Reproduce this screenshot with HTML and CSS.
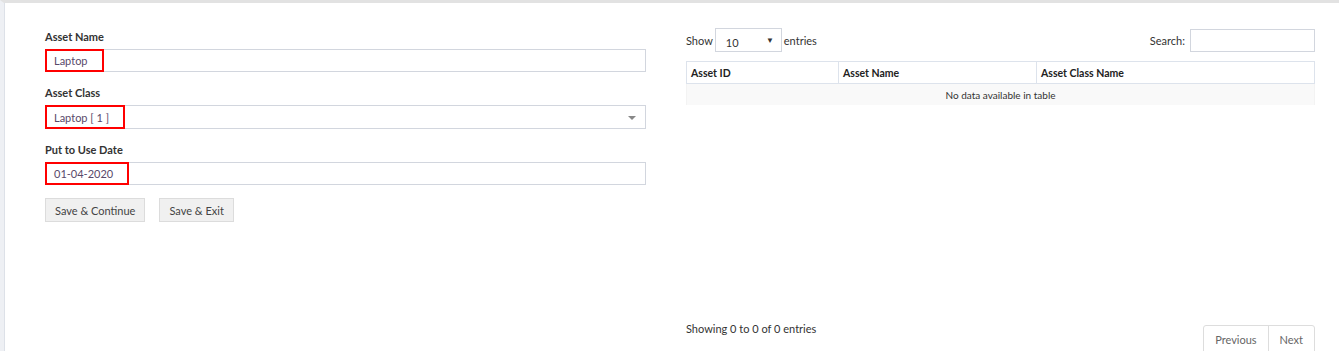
FILE: index.html
```html
<!DOCTYPE html>
<html lang="en">
<head>
    <meta charset="UTF-8">
    <meta name="viewport" content="width=device-width, initial-scale=1.0">
    <title>Asset Master</title>
    <link rel="stylesheet" href="styles.css">
</head>
<body>
    <div class="page">
        <div class="content">
            <!-- Entry form -->
            <form class="asset-form">
                <div class="form-group">
                    <label class="form-label">Asset Name</label>
                    <div class="form-control">
                        <span class="value mark">Laptop</span>
                    </div>
                </div>
                <div class="form-group">
                    <label class="form-label">Asset Class</label>
                    <div class="form-control select">
                        <span class="value mark">Laptop [ 1 ]</span>
                        <span class="caret"></span>
                    </div>
                </div>
                <div class="form-group">
                    <label class="form-label">Put to Use Date</label>
                    <div class="form-control">
                        <span class="value mark">01-04-2020</span>
                    </div>
                </div>
                <div class="form-actions">
                    <button type="button" class="btn">Save &amp; Continue</button>
                    <button type="button" class="btn">Save &amp; Exit</button>
                </div>
            </form>

            <!-- Listing -->
            <div class="listing">
                <div class="list-toolbar">
                    <div class="length">
                        Show
                        <span class="length-select">10<span class="tri">&#9660;</span></span>
                        entries
                    </div>
                    <div class="search">
                        Search:
                        <span class="search-input"></span>
                    </div>
                </div>
                <div class="table-wrap">
                    <table class="data-table">
                        <thead>
                            <tr>
                                <th class="col-id">Asset ID</th>
                                <th class="col-name">Asset Name</th>
                                <th>Asset Class Name</th>
                            </tr>
                        </thead>
                        <tbody>
                            <tr>
                                <td colspan="3" class="empty">No data available in table</td>
                            </tr>
                        </tbody>
                    </table>
                </div>
                <div class="list-footer">
                    <div class="info">Showing 0 to 0 of 0 entries</div>
                    <div class="pager">
                        <span class="page-btn">Previous</span>
                        <span class="page-btn">Next</span>
                    </div>
                </div>
            </div>
        </div>
    </div>
</body>
</html>
```

FILE: styles.css
```css
body {
  margin: 0;
  padding: 0;
  font-family: 'Lato', 'Liberation Sans', sans-serif;
  color: #333;
  background: #fff;
  height: 351px;
  overflow: hidden;
}

.page {
  height: 351px;
  box-sizing: border-box;
  border-top: 3px solid #e2e2e2;
  border-left: 4px solid #eef0f4;
  background: #fff;
}

.content {
  height: 100%;
  box-sizing: border-box;
  border-left: 1px solid #dde1e8;
  padding: 0 24px 0 40px;
  display: grid;
  grid-template-columns: 601px 1fr;
  column-gap: 40px;
}

/* Form */
.asset-form {
  padding-top: 27px;
}

.form-group {
  margin-bottom: 14px;
}

.form-group:nth-last-child(2) {
  margin-bottom: 13px;
}

.form-label {
  display: block;
  font-size: 11px;
  font-weight: 700;
  color: #333;
  line-height: 14px;
  margin-bottom: 5px;
}

.form-control {
  position: relative;
  height: 23px;
  box-sizing: border-box;
  border: 1px solid #d2d6de;
  display: flex;
  align-items: center;
}

.form-control.select {
  height: 24px;
}

.value {
  font-size: 11px;
  color: #58496a;
  padding: 0 7px;
}

/* red highlight marks on the filled values */
.mark {
  position: absolute;
  left: -1px;
  top: -1px;
  bottom: -1px;
  display: flex;
  align-items: center;
  padding: 0 14px 0 7px;
  border: 2px solid #ff0000;
  box-sizing: border-box;
}

.caret {
  position: absolute;
  right: 9px;
  top: 10px;
  border-left: 4px solid transparent;
  border-right: 4px solid transparent;
  border-top: 4px solid #888;
}

.form-actions {
  display: flex;
  gap: 14px;
}

.btn {
  font-family: inherit;
  font-size: 11px;
  color: #444;
  background: #f0f0f0;
  border: 1px solid #dcdcdc;
  height: 24px;
  padding: 0 9px;
  cursor: pointer;
}

/* Listing */
.listing {
  display: flex;
  flex-direction: column;
  font-size: 11px;
}

.list-toolbar {
  display: flex;
  justify-content: space-between;
  align-items: center;
  padding-top: 26px;
  margin-bottom: 9px;
}

.length {
  display: flex;
  align-items: center;
  gap: 2px;
  color: #333;
  font-size: 11px;
  margin-top: -1px;
}

.length-select {
  position: relative;
  width: 67px;
  height: 24px;
  box-sizing: border-box;
  border: 1px solid #d2d6de;
  padding: 7px 0 0 10px;
  font-size: 11px;
}

.tri {
  position: absolute;
  right: 7px;
  top: 6px;
  font-size: 8px;
  color: #333;
}

.search {
  display: flex;
  align-items: center;
  gap: 5px;
  font-size: 11px;
}

.search-input {
  width: 125px;
  height: 23px;
  box-sizing: border-box;
  border: 1px solid #d2d6de;
}

.table-wrap {
  height: 264px;
}

.data-table {
  width: 100%;
  border-collapse: collapse;
}

.data-table th {
  text-align: left;
  font-size: 10.5px;
  font-weight: 700;
  color: #222;
  height: 21px;
  padding: 0 4px;
  border: 1px solid #dde3ec;
}

.data-table .col-id {
  width: 143px;
}

.data-table .col-name {
  width: 189px;
}

.data-table td.empty {
  text-align: center;
  background: #f9f9f9;
  font-size: 10px;
  color: #333;
  height: 21px;
  padding: 0;
  border-left: 1px solid #f3f3f3;
  border-right: 1px solid #f3f3f3;
}

.list-footer {
  display: flex;
  justify-content: space-between;
  align-items: flex-start;
}

.info {
  font-size: 11px;
  color: #333;
  margin-top: -3px;
}

.pager {
  display: flex;
  border: 1px solid #dddddd;
  border-radius: 3px 3px 0 0;
}

.page-btn {
  padding: 7px 11px 10px 11px;
  font-size: 11px;
  color: #666;
}

.page-btn + .page-btn {
  border-left: 1px solid #dddddd;
}
```
